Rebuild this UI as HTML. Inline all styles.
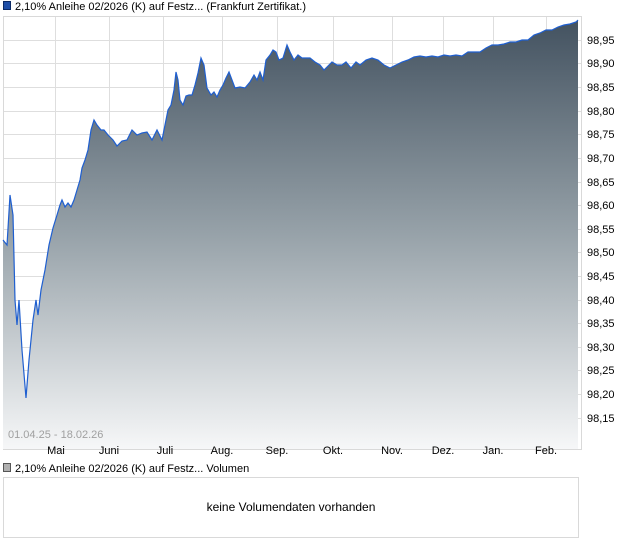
<!DOCTYPE html>
<html><head><style>
body{margin:0;width:620px;height:546px;background:#fff;font-family:"Liberation Sans",Arial,sans-serif;overflow:hidden;position:relative}
.t{position:absolute;font-size:11px;color:#000;white-space:nowrap}
</style></head><body>
<svg width="620" height="546" style="position:absolute;left:0;top:0" font-family="Liberation Sans, Arial, sans-serif" font-size="11">
<defs><linearGradient id="g" gradientUnits="userSpaceOnUse" x1="0" y1="20" x2="0" y2="449">
<stop offset="0" stop-color="#435260"/><stop offset="0.5" stop-color="#97a2a9"/><stop offset="1" stop-color="#f6f7f8"/></linearGradient></defs>
<rect x="3.5" y="1.5" width="7" height="8" fill="#1f4fa8" stroke="#0c2a66"/>
<text x="15" y="10">2,10% Anleihe 02/2026 (K) auf Festz... (Frankfurt Zertifikat.)</text>
<rect x="3.5" y="16.5" width="578" height="433" fill="#fff" stroke="#d9d9d9"/>
<g stroke="#dedede" stroke-width="1">
<path d="M55.5 17V449M109.5 17V449M163.5 17V449M222.5 17V449M277.5 17V449M333.5 17V449M392.5 17V449M443.5 17V449M493.5 17V449M546.5 17V449"/>
<path d="M4 40.5H581M4 63.5H581M4 87.5H581M4 111.5H581M4 134.5H581M4 158.5H581M4 182.5H581M4 205.5H581M4 229.5H581M4 252.5H581M4 276.5H581M4 300.5H581M4 323.5H581M4 347.5H581M4 370.5H581M4 394.5H581M4 418.5H581"/>
</g>
<polygon fill="url(#g)" points="3,449 3,240 7,245 10,195 13,215 15,300 17,325 19,300 22,350 26,398 29,360 33,320 36,300 38,315 41,290 45,270 49,245 53,228 57,215 60,205 62,200 65,207 68,203 71,207 74,200 77,190 80,180 82,168 85,160 88,150 91,130 94,120 97,125 101,130 104,130 108,135 113,140 117,146 122,141 127,140 132,130 137,135 142,133 147,132 152,140 157,130 162,140 165,125 168,110 171,105 174,90 176,72 178,80 180,100 183,105 186,96 189,95 192,95 195,85 198,73 201,58 204,65 207,88 211,95 214,92 217,97 220,90 223,85 226,78 229,72 232,80 235,88 240,87 245,88 250,82 254,75 257,80 260,72 263,80 266,60 270,55 273,50 276,52 279,60 283,58 287,45 290,52 294,60 298,55 302,58 306,58 310,58 315,62 320,65 324,70 328,66 332,62 337,65 342,65 346,62 351,68 356,62 360,65 366,60 372,58 378,60 384,65 390,68 396,65 402,62 408,60 414,57 420,56 426,57 432,56 438,57 444,55 450,56 456,55 462,56 468,52 474,52 480,52 486,48 492,45 498,45 504,44 510,42 516,42 522,40 528,40 534,35 540,33 546,30 552,30 558,27 564,25 570,24 576,22 578,20 578,449"/>
<polyline fill="none" stroke="#1f5fd0" stroke-width="1.2" points="3,240 7,245 10,195 13,215 15,300 17,325 19,300 22,350 26,398 29,360 33,320 36,300 38,315 41,290 45,270 49,245 53,228 57,215 60,205 62,200 65,207 68,203 71,207 74,200 77,190 80,180 82,168 85,160 88,150 91,130 94,120 97,125 101,130 104,130 108,135 113,140 117,146 122,141 127,140 132,130 137,135 142,133 147,132 152,140 157,130 162,140 165,125 168,110 171,105 174,90 176,72 178,80 180,100 183,105 186,96 189,95 192,95 195,85 198,73 201,58 204,65 207,88 211,95 214,92 217,97 220,90 223,85 226,78 229,72 232,80 235,88 240,87 245,88 250,82 254,75 257,80 260,72 263,80 266,60 270,55 273,50 276,52 279,60 283,58 287,45 290,52 294,60 298,55 302,58 306,58 310,58 315,62 320,65 324,70 328,66 332,62 337,65 342,65 346,62 351,68 356,62 360,65 366,60 372,58 378,60 384,65 390,68 396,65 402,62 408,60 414,57 420,56 426,57 432,56 438,57 444,55 450,56 456,55 462,56 468,52 474,52 480,52 486,48 492,45 498,45 504,44 510,42 516,42 522,40 528,40 534,35 540,33 546,30 552,30 558,27 564,25 570,24 576,22 578,20"/>
<g text-anchor="start">
<text x="587" y="44">98,95</text><text x="587" y="67">98,90</text><text x="587" y="91">98,85</text><text x="587" y="115">98,80</text><text x="587" y="138">98,75</text><text x="587" y="162">98,70</text><text x="587" y="186">98,65</text><text x="587" y="209">98,60</text><text x="587" y="233">98,55</text><text x="587" y="256">98,50</text><text x="587" y="280">98,45</text><text x="587" y="304">98,40</text><text x="587" y="327">98,35</text><text x="587" y="351">98,30</text><text x="587" y="374">98,25</text><text x="587" y="398">98,20</text><text x="587" y="422">98,15</text>
</g>
<text x="8" y="438" fill="#a0a0a0">01.04.25 - 18.02.26</text>
<g text-anchor="middle">
<text x="56" y="454">Mai</text><text x="109" y="454">Juni</text><text x="165" y="454">Juli</text><text x="222" y="454">Aug.</text><text x="277" y="454">Sep.</text><text x="333" y="454">Okt.</text><text x="392" y="454">Nov.</text><text x="443" y="454">Dez.</text><text x="493" y="454">Jan.</text><text x="546" y="454">Feb.</text>
</g>
<rect x="3.5" y="463.5" width="7" height="8" fill="#b0b0b0" stroke="#555"/>
<text x="15" y="472">2,10% Anleihe 02/2026 (K) auf Festz... Volumen</text>
<rect x="3.5" y="477.5" width="575" height="60" fill="#fff" stroke="#d9d9d9"/>
<text x="291" y="511" text-anchor="middle" font-size="12">keine Volumendaten vorhanden</text>
</svg>
</body></html>
